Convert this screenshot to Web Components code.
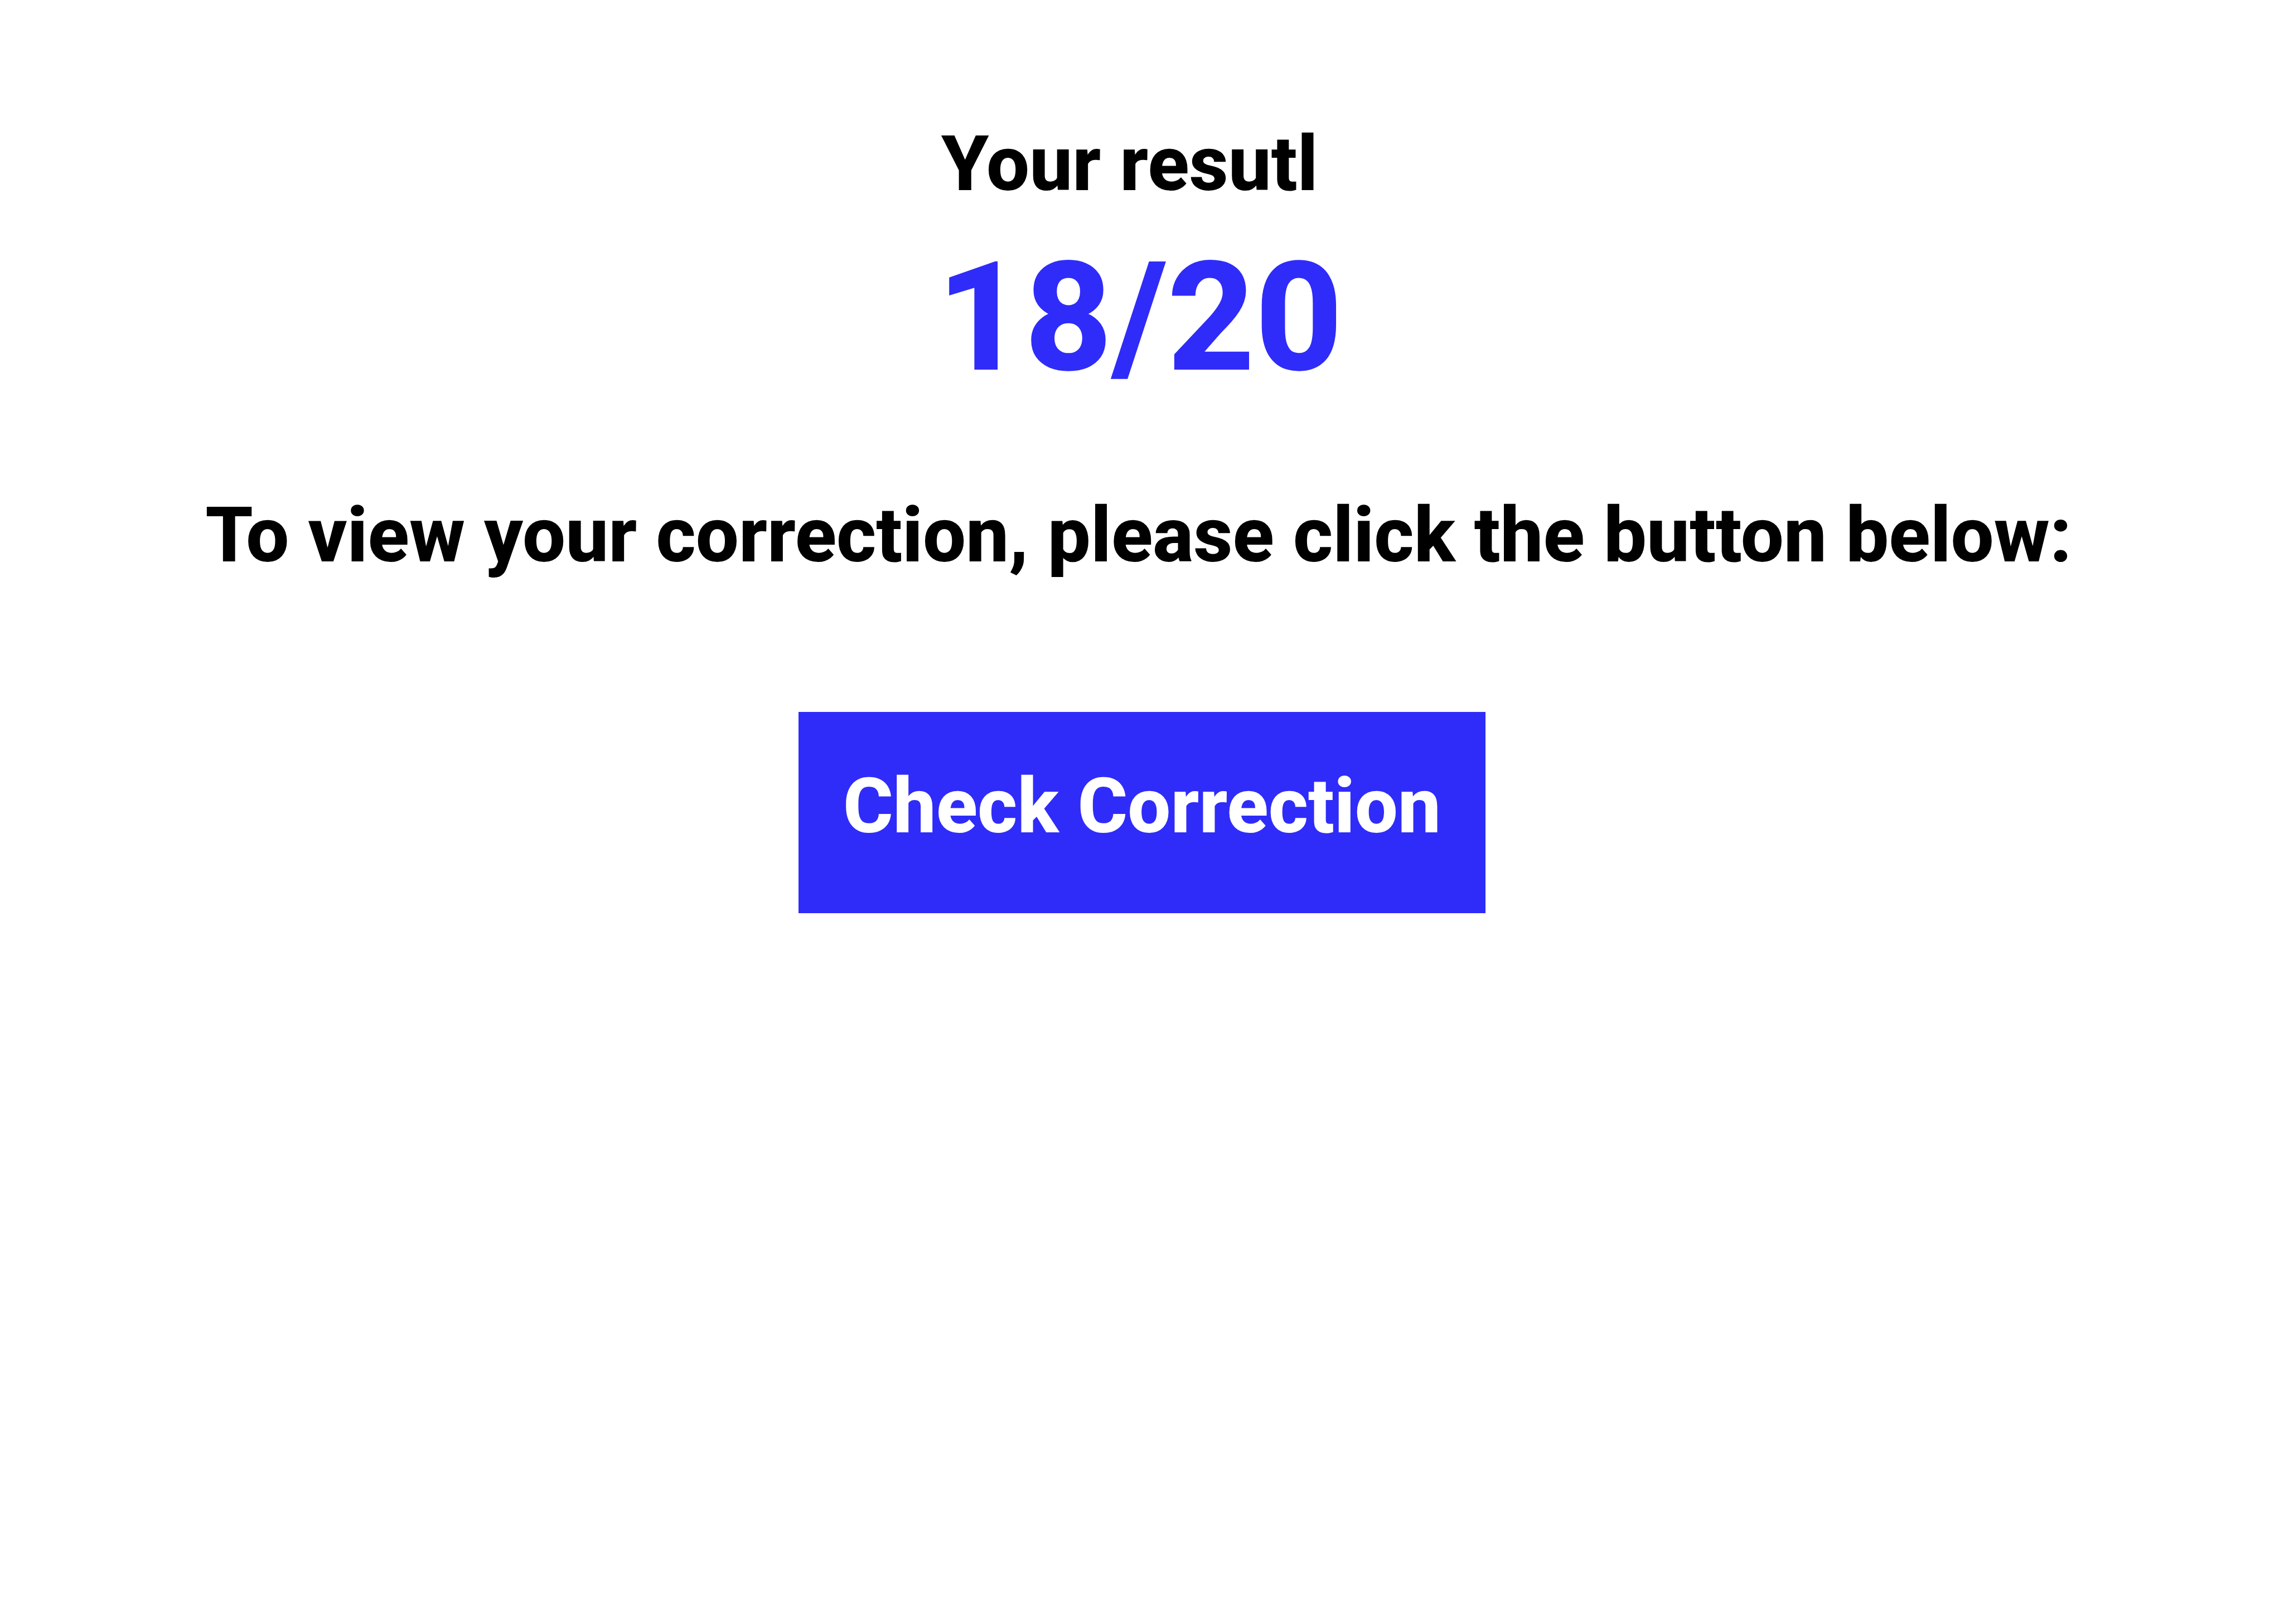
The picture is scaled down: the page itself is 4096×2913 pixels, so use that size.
<!DOCTYPE html>
<html lang="en">
<head>
<meta charset="utf-8">
<title>Your result</title>
<style>
  :root { --accent: #2f2cf9; --text-size: 137px; --text-line: 160px; }
  body { margin: 0; background: #fff; color: #000; font-family: Roboto, "Liberation Sans", sans-serif; font-weight: 800; }
</style>
</head>
<body>
<result-page>
  <result-score score="18/20">Your resutl</result-score>
  <result-message>To view your correction, please click the button below:</result-message>
  <action-button>Check Correction</action-button>
</result-page>
<script>
  class BaseElement extends HTMLElement {
    constructor() {
      super();
      this.attachShadow({ mode: "open" }).innerHTML = this.constructor.markup;
    }
  }

  customElements.define("result-page", class extends BaseElement {
    static markup = `
      <style>
        :host { display: block; min-height: 100vh; box-sizing: border-box; padding-top: 214px; background: #fff; }
        main { display: flex; flex-direction: column; align-items: center; }
      </style>
      <main><slot></slot></main>`;
  });

  customElements.define("result-score", class extends BaseElement {
    static markup = `
      <style>
        :host { display: flex; flex-direction: column; align-items: flex-start; gap: 36px; padding-right: 8px; }
        h1, p { margin: 0; font-weight: inherit; white-space: nowrap; }
        h1 { padding-left: 8px; font-size: var(--text-size); line-height: var(--text-line); }
        p { font-size: 273px; line-height: 320px; color: var(--accent); }
      </style>
      <h1><slot></slot></h1>
      <p></p>`;
    connectedCallback() {
      this.shadowRoot.querySelector("p").textContent = this.getAttribute("score");
    }
  });

  customElements.define("result-message", class extends BaseElement {
    static markup = `
      <style>
        :host { display: block; margin-top: 150px; padding-right: 12px; }
        p { margin: 0; font-size: var(--text-size); line-height: var(--text-line); text-align: center; }
      </style>
      <p><slot></slot></p>`;
  });

  customElements.define("action-button", class extends BaseElement {
    static markup = `
      <style>
        :host { display: block; margin-top: 237px; }
        button {
          display: block; margin: 0; border: 0; border-radius: 0; padding: 89px 80px 112px;
          background: var(--accent); color: #fff; cursor: pointer;
          font: inherit; font-size: var(--text-size); line-height: var(--text-line); white-space: nowrap;
        }
      </style>
      <button type="button"><slot></slot></button>`;
  });
</script>
</body>
</html>
